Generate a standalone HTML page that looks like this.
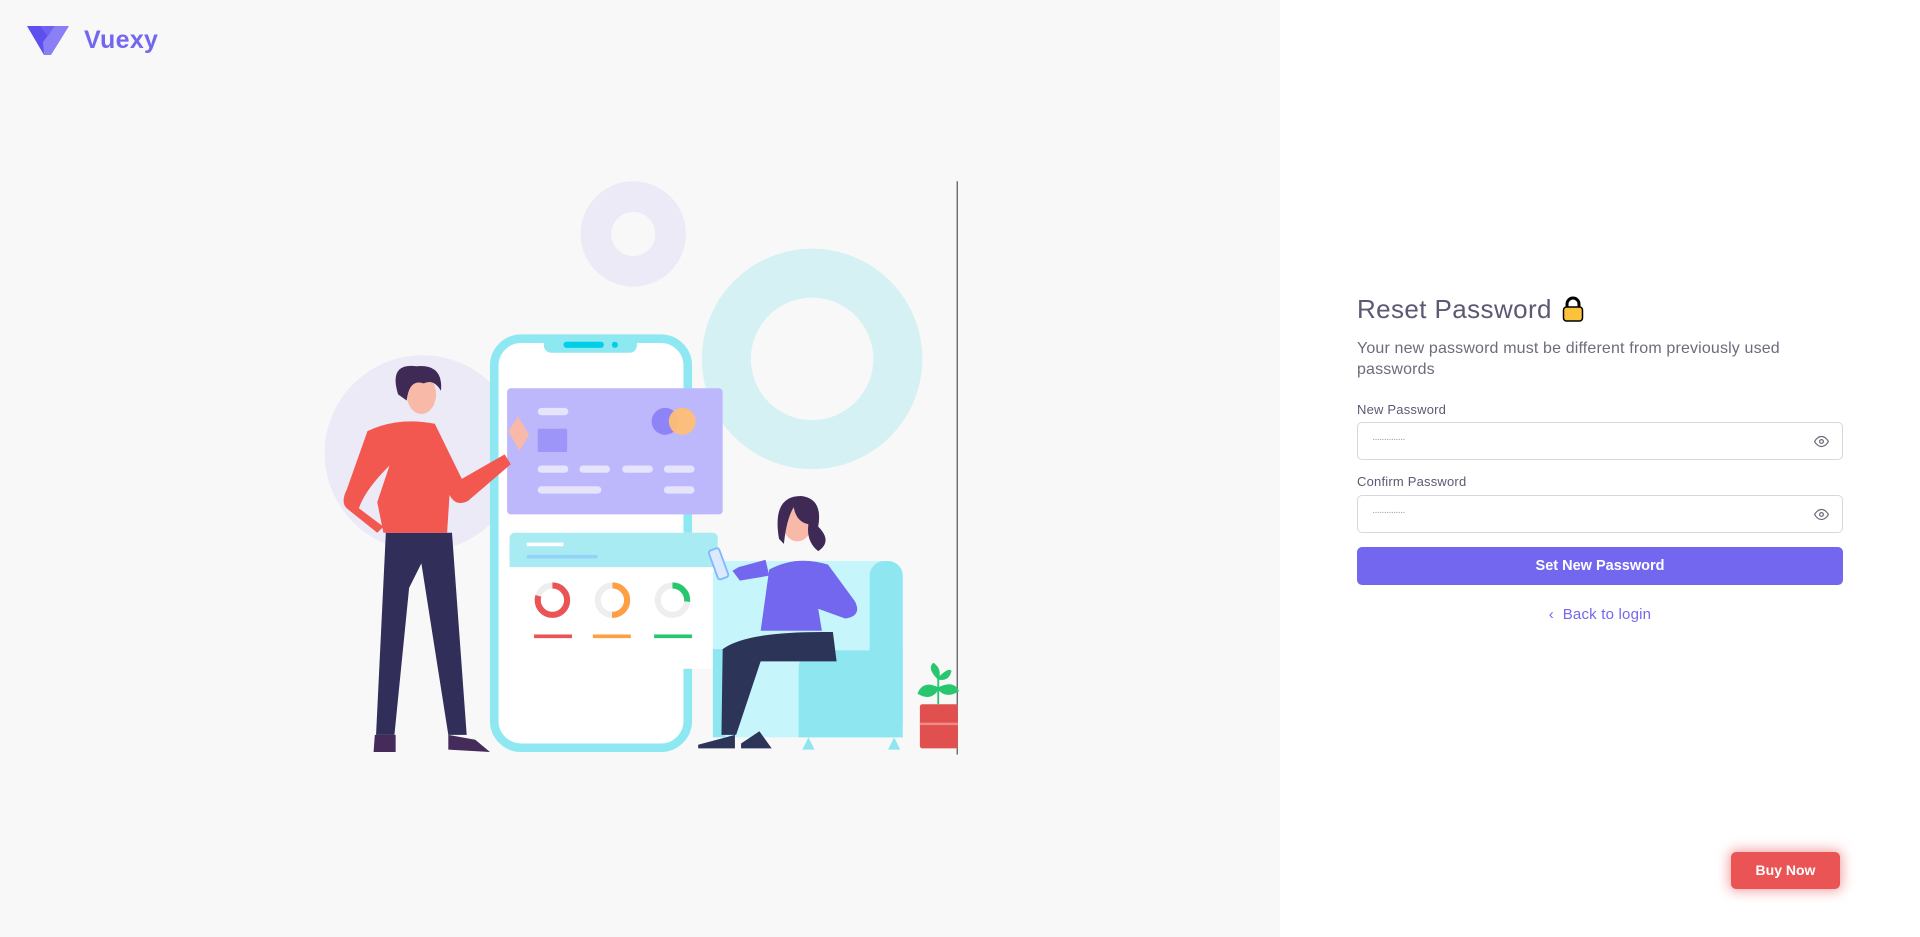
<!DOCTYPE html>
<html><head><meta charset="utf-8"><style>
*{box-sizing:border-box;margin:0;padding:0}
body{width:1920px;height:937px;overflow:hidden;font-family:"Liberation Sans",sans-serif;background:#fff;position:relative}
.left{position:absolute;left:0;top:0;width:1280px;height:937px;background:#f8f8f8}
.logo{position:absolute;left:27px;top:26px;display:flex;align-items:center}
.logo span{font-size:25px;font-weight:bold;color:#7367f0;margin-left:15px;letter-spacing:0.3px}
.form{position:absolute;left:1357px;top:291px;width:486px;color:#5e5873}
h2{font-size:26px;font-weight:normal;color:#5e5873;display:flex;align-items:center;height:36px;letter-spacing:0.4px}
.sub{font-size:16px;color:#6e6b7b;line-height:21px;margin-top:10.5px;width:450px;letter-spacing:0.15px}
label{display:block;font-size:13px;height:15px;line-height:15px;letter-spacing:0.2px}
.l1{margin-top:22px;margin-bottom:5.5px}
.l2{margin-top:13.5px;margin-bottom:6.5px}
.inp{height:38px;border:1px solid #d8d6de;border-radius:5px;position:relative}
.inp .d{position:absolute;left:14px;top:11px;font-size:10px;color:#999;letter-spacing:-1px}
.inp svg{position:absolute;right:13px;top:12px}
.btn{margin-top:14px;height:38px;background:#7367f0;border-radius:5px;color:#fff;font-size:14.5px;font-weight:bold;text-align:center;line-height:38px}
.back{text-align:center;margin-top:21px;color:#7367f0;font-size:15px;letter-spacing:0.2px}
.buy{position:absolute;left:1731px;top:852px;width:109px;height:37px;background:#ea5455;border-radius:5px;color:#fff;font-size:14px;font-weight:bold;text-align:center;line-height:37px;box-shadow:0 0 12px 2px rgba(234,84,85,.55)}
</style></head><body>
<div class="left">
<div class="logo"><svg width="42" height="29" viewBox="0 0 42 29"><path d="M0 0 L14 0 L24 14 L17 29 Z" fill="#5e50ee"/><path d="M42 0 L28 0 L16 16 L17 29 L24 29 Z" fill="#8a7ff5"/><path d="M14 0 L21 10 L28 0" fill="#6f62f0"/></svg><span>Vuexy</span></div>
<svg style="position:absolute;left:0;top:0" width="1280" height="937" viewBox="0 0 1045 765">
<circle cx="517" cy="191" r="30.5" fill="none" stroke="#ebeaf6" stroke-width="25"/>
<circle cx="663" cy="293" r="70" fill="none" stroke="#d6f1f4" stroke-width="40"/>
<circle cx="345" cy="370" r="80" fill="#ebeaf6"/>
<line x1="781.5" y1="148" x2="781.5" y2="616" stroke="#555" stroke-width="1"/>
<rect x="403.5" y="276.5" width="158" height="334" rx="22" fill="#fff" stroke="#8ee8f1" stroke-width="7"/>
<path d="M444 276 h76 v6 a6 6 0 0 1 -6 6 h-64 a6 6 0 0 1 -6 -6z" fill="#8ee8f1"/>
<rect x="460" y="279" width="33" height="5" rx="2.5" fill="#00cfe8"/><circle cx="502" cy="281.5" r="2.5" fill="#00cfe8"/>
<rect x="414" y="317" width="176" height="103" rx="3" fill="#bdb7fc"/>
<rect x="439" y="333" width="25" height="6" rx="3" fill="#e6e4fc"/>
<rect x="439" y="350" width="24" height="19" rx="1" fill="#9e95f8"/>
<circle cx="543" cy="344" r="11" fill="#8e83f7"/><circle cx="557" cy="344" r="11" fill="#ffbe75" opacity=".95"/>
<g fill="#e6e4fc"><rect x="439" y="380" width="25" height="6" rx="3"/><rect x="473" y="380" width="25" height="6" rx="3"/><rect x="508" y="380" width="25" height="6" rx="3"/><rect x="542" y="380" width="25" height="6" rx="3"/><rect x="439" y="397" width="52" height="6" rx="3"/><rect x="542" y="397" width="25" height="6" rx="3"/></g>
<rect x="416" y="435" width="170" height="111" rx="4" fill="#fff"/>
<path d="M420 435 h162 a4 4 0 0 1 4 4 v24 h-170 v-24 a4 4 0 0 1 4 -4z" fill="#a8ebf3"/>
<rect x="430" y="443" width="30" height="3" fill="#fff"/><rect x="430" y="453" width="58" height="3" rx="1.5" fill="#93d2f9"/>
<g fill="none" stroke-width="5"><circle cx="451" cy="490" r="12" stroke="#eee"/><circle cx="451" cy="490" r="12" stroke="#ea5455" stroke-dasharray="60 76" transform="rotate(-90 451 490)"/>
<circle cx="500" cy="490" r="12" stroke="#eee"/><circle cx="500" cy="490" r="12" stroke="#ff9f43" stroke-dasharray="38 76" transform="rotate(-90 500 490)"/>
<circle cx="549" cy="490" r="12" stroke="#eee"/><circle cx="549" cy="490" r="12" stroke="#28c76f" stroke-dasharray="20 76" transform="rotate(-90 549 490)"/></g>
<rect x="436" y="518" width="31" height="3" fill="#ea5455"/><rect x="484" y="518" width="31" height="3" fill="#ff9f43"/><rect x="534" y="518" width="31" height="3" fill="#28c76f"/>
<rect x="582" y="458" width="155" height="144" rx="12" fill="#c6f6fc"/>
<rect x="710" y="458" width="27" height="144" rx="12" fill="#8ee6f0"/>
<path d="M652 545 a14 14 0 0 1 14 -14 h71 v71 h-85z" fill="#8ee6f0"/>
<path d="M582 530 h10 v72 h-10z" fill="#8ee6f0"/>
<path d="M660 602 l-5 10 h10z M730 602 l-5 10 h10z" fill="#8ee6f0"/>
<path d="M628 465 q22 -12 48 -4 l22 30 q6 12 -8 14 l-22 -8 l3 18 h-50z" fill="#7367f0"/>
<path d="M628 470 l-24 4 l-6 -8 l5 -3 l22 -6z" fill="#7367f0"/>
<path d="M590 530 q20 -15 90 -14 l3 24 h-62 l-20 60 h-12z" fill="#2c3558"/>
<path d="M600 600 l-30 8 l0 3 l30 0z M620 597 l-15 10 l0 4 l25 0z" fill="#2c3558"/>
<rect x="582" y="448" width="9" height="25" rx="2" fill="#dceaff" stroke="#84b6fc" stroke-width="1.5" transform="rotate(-20 586 460)"/>
<ellipse cx="651" cy="427" rx="12" ry="15" fill="#f9b9a8"/>
<path d="M636 440 q-6 -35 18 -35 q18 2 14 25 q12 12 0 20 q-10 -8 -8 -22 q-10 -2 -12 -14 q-6 10 -8 30z" fill="#3f2a56"/>
<path d="M315 435 l-8 165 h15 l12 -120 l10 -20 l22 140 h15 l-12 -165z" fill="#322e5a"/>
<path d="M306 600 l-1 14 h18 v-14z M366 600 l0 12 l34 2 l-12 -10z" fill="#452b59"/>
<path d="M300 352 q25 -12 55 -6 l22 45 l35 -20 l5 8 l-35 30 q-10 5 -15 -5 l-2 31 h-52 l-5 -25 l10 -30 q-20 20 -25 35 l20 15 l-5 5 l-25 -20 q-5 -5 0 -15z" fill="#f2584f"/>
<path d="M415 352 l8 -12 l9 15 l-8 13z" fill="#f9b9a8"/>
<ellipse cx="344" cy="322" rx="12" ry="16" fill="#f9b9a8"/>
<path d="M325 322 q-8 -26 15 -23 q22 -2 20 20 q-6 -10 -14 -6 q-12 -4 -14 14z" fill="#3f2a56"/>
<rect x="751" y="575" width="31" height="36" rx="2" fill="#e0504f"/>
<rect x="751" y="590" width="31" height="2" fill="#f08a84"/>
<path d="M766 575 v-22 M766 562 q-12 -6 -16 4 q10 6 16 -4 M766 562 q12 -6 16 2 q-10 6 -16 -2 M766 554 q-8 -8 -4 -12 q6 4 4 12 M766 554 q8 -8 10 -6 q-2 8 -10 6" fill="#28c76f" stroke="#28c76f" stroke-width="1.5"/>
</svg>
</div>
<div class="form">
<h2>Reset Password <svg style="margin-left:10px" width="22" height="26" viewBox="0 0 22 26"><path d="M5 12 V8 a6 6 0 0 1 12 0 V12" fill="none" stroke="#000" stroke-width="3"/><rect x="1.5" y="11" width="19" height="14" rx="3" fill="#fcc23b" stroke="#000" stroke-width="1.5"/></svg></h2>
<div class="sub">Your new password must be different from previously used passwords</div>
<label class="l1">New Password</label>
<div class="inp"><span class="d">··············</span><svg width="15" height="13" viewBox="0 0 24 20"><path d="M1 10 s4 -8 11 -8 s11 8 11 8 s-4 8 -11 8 s-11 -8 -11 -8z" fill="none" stroke="#6e6b7b" stroke-width="2"/><circle cx="12" cy="10" r="3" fill="none" stroke="#6e6b7b" stroke-width="2"/></svg></div>
<label class="l2">Confirm Password</label>
<div class="inp"><span class="d">··············</span><svg width="15" height="13" viewBox="0 0 24 20"><path d="M1 10 s4 -8 11 -8 s11 8 11 8 s-4 8 -11 8 s-11 -8 -11 -8z" fill="none" stroke="#6e6b7b" stroke-width="2"/><circle cx="12" cy="10" r="3" fill="none" stroke="#6e6b7b" stroke-width="2"/></svg></div>
<div class="btn">Set New Password</div>
<div class="back">‹&nbsp;&nbsp;Back to login</div>
</div>
<div class="buy">Buy Now</div>
</body></html>
